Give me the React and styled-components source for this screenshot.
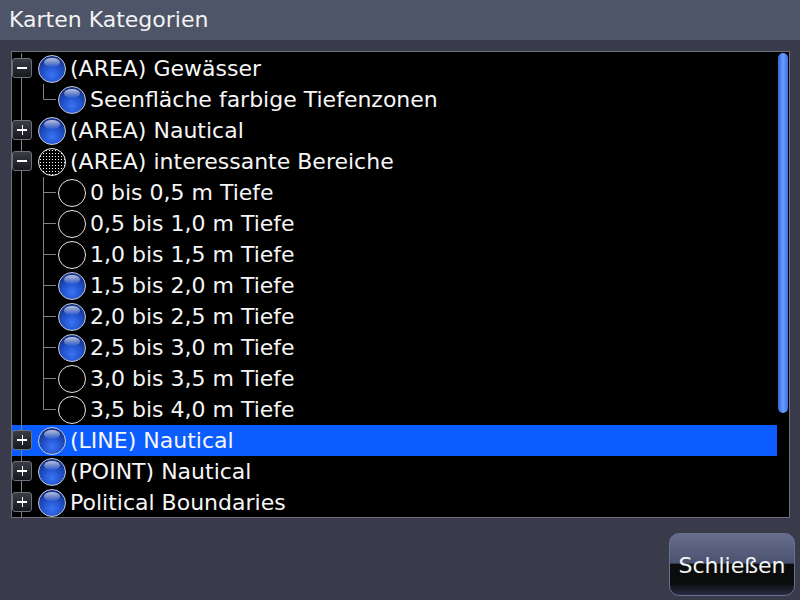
import React from 'react';
import styled, { createGlobalStyle, css } from 'styled-components';

const GlobalStyle = createGlobalStyle`
  html, body {
    margin: 0;
    padding: 0;
    background: #393b4a;
  }
  * {
    box-sizing: border-box;
  }
`;

const rows = [
  { label: '(AREA) Gewässer', level: 0, toggle: 'minus', ball: 'filled' },
  { label: 'Seenfläche farbige Tiefenzonen', level: 1, branch: 'elbow', ball: 'filled' },
  { label: '(AREA) Nautical', level: 0, toggle: 'plus', ball: 'filled' },
  { label: '(AREA) interessante Bereiche', level: 0, toggle: 'minus', ball: 'dotted' },
  { label: '0 bis 0,5 m Tiefe', level: 1, branch: 'tee', ball: 'empty' },
  { label: '0,5 bis 1,0 m Tiefe', level: 1, branch: 'tee', ball: 'empty' },
  { label: '1,0 bis 1,5 m Tiefe', level: 1, branch: 'tee', ball: 'empty' },
  { label: '1,5 bis 2,0 m Tiefe', level: 1, branch: 'tee', ball: 'filled' },
  { label: '2,0 bis 2,5 m Tiefe', level: 1, branch: 'tee', ball: 'filled' },
  { label: '2,5 bis 3,0 m Tiefe', level: 1, branch: 'tee', ball: 'filled' },
  { label: '3,0 bis 3,5 m Tiefe', level: 1, branch: 'tee', ball: 'empty' },
  { label: '3,5 bis 4,0 m Tiefe', level: 1, branch: 'elbow', ball: 'empty' },
  { label: '(LINE) Nautical', level: 0, toggle: 'plus', ball: 'filled', selected: true },
  { label: '(POINT) Nautical', level: 0, toggle: 'plus', ball: 'filled' },
  { label: 'Political Boundaries', level: 0, toggle: 'plus', ball: 'filled' },
];

const TreeLines = ({ level, branch }) => {
  const width = level === 0 ? 24 : 44;
  return (
    <Lines width={width} height="31" viewBox={`0 0 ${width} 31`}>
      <line x1="9.5" y1="0" x2="9.5" y2="31" stroke="#7d7f88" strokeWidth="1" />
      {level === 1 && (
        <>
          <line
            x1="31.5"
            y1="0"
            x2="31.5"
            y2={branch === 'tee' ? 31 : 15.5}
            stroke="#7d7f88"
            strokeWidth="1"
          />
          <line x1="31.5" y1="15.5" x2="44" y2="15.5" stroke="#7d7f88" strokeWidth="1" />
        </>
      )}
    </Lines>
  );
};

const TreeRow = ({ label, level, toggle, branch, ball, selected }) => (
  <Row selected={selected}>
    <Gutter>
      <TreeLines level={level} branch={branch} />
      {toggle && <Toggle kind={toggle} />}
    </Gutter>
    <Ball kind={ball} />
    <Label>{label}</Label>
  </Row>
);

export default function App() {
  return (
    <>
      <GlobalStyle />
      <Screen>
        <TitleBar>Karten Kategorien</TitleBar>
        <Panel>
          <TreeList>
            {rows.map((r) => (
              <TreeRow key={r.label} {...r} />
            ))}
          </TreeList>
          <ScrollThumb />
        </Panel>
        <Footer>
          <CloseButton>
            <span>Schließen</span>
          </CloseButton>
        </Footer>
      </Screen>
    </>
  );
}

const Screen = styled.div`
  width: 800px;
  height: 600px;
  display: flex;
  flex-direction: column;
  background: #393b4a;
  font-family: 'DejaVu Sans', Verdana, sans-serif;
  color: #f4f4f4;
  overflow: hidden;
`;

const TitleBar = styled.div`
  height: 40px;
  flex: none;
  display: flex;
  align-items: center;
  padding-left: 9px;
  padding-bottom: 2px;
  background: #4e5569;
  font-size: 22px;
  color: #f2f2f2;
`;

const Panel = styled.div`
  position: relative;
  margin: 11px 0 0 11px;
  width: 779px;
  height: 467px;
  flex: none;
  border: 1px solid #6e717c;
  background: #000;
  padding: 1px 12px 0 0;
  overflow: hidden;
`;

const TreeList = styled.div`
  display: flex;
  flex-direction: column;
`;

const Row = styled.div`
  height: 31px;
  display: flex;
  align-items: center;
  background: ${({ selected }) => (selected ? '#0b5dff' : 'transparent')};
`;

const Gutter = styled.div`
  position: relative;
  height: 31px;
  flex: none;
  display: flex;
`;

const Lines = styled.svg`
  display: block;
`;

const Toggle = styled.div`
  position: absolute;
  left: 0;
  top: 5px;
  width: 20px;
  height: 20px;
  border: 1px solid #6f727c;
  border-radius: 3px;
  background: linear-gradient(#3b3d45, #17181c);

  &::before,
  &::after {
    content: '';
    position: absolute;
    background: #fff;
  }
  &::before {
    left: 4px;
    top: 8px;
    width: 10px;
    height: 1.5px;
  }
  ${({ kind }) =>
    kind === 'plus'
      ? css`
          &::after {
            left: 8.5px;
            top: 3.5px;
            width: 1.5px;
            height: 10px;
          }
        `
      : css`
          &::after {
            display: none;
          }
        `}
`;

const ballStyles = {
  filled: css`
    border: 1px solid #c9cdd8;
    background: radial-gradient(
      circle at 50% 72%,
      #3a74f4 0%,
      #2252cc 40%,
      #15348c 75%,
      #0b1b55 100%
    );
    &::after {
      content: '';
      position: absolute;
      left: 5px;
      top: 2px;
      width: 16px;
      height: 9px;
      border-radius: 50%;
      background: linear-gradient(rgba(255, 255, 255, 0.7), rgba(255, 255, 255, 0.04));
    }
  `,
  empty: css`
    border: 1px solid #e6e6e6;
    background: #000;
  `,
  dotted: css`
    border: 1px solid #f0f0f0;
    background-color: #000;
    background-image: radial-gradient(circle, #fff 0.6px, transparent 0.9px);
    background-size: 3px 3px;
  `,
};

const Ball = styled.div`
  position: relative;
  width: 28px;
  height: 28px;
  flex: none;
  margin-left: 2px;
  border-radius: 50%;
  ${({ kind }) => ballStyles[kind]}
`;

const Label = styled.span`
  margin-left: 4px;
  font-size: 22px;
  white-space: nowrap;
  color: #f6f6f6;
`;

const ScrollThumb = styled.div`
  position: absolute;
  right: 1px;
  top: 1px;
  width: 10px;
  height: 360px;
  border-radius: 5px;
  background: linear-gradient(90deg, #2f66dc, #6a9fff 50%, #3a72e6);
`;

const Footer = styled.div`
  flex: 1;
  display: flex;
  justify-content: flex-end;
  align-items: flex-end;
  padding: 0 5px 4px 0;
`;

const CloseButton = styled.button`
  width: 126px;
  height: 63px;
  padding: 0;
  border: 1px solid #6a7090;
  border-radius: 10px;
  background: linear-gradient(
    #666e8c 0%,
    #4b5270 48%,
    #0b0d0d 49%,
    #0b0d0d 80%,
    #272c40 100%
  );
  font-family: 'DejaVu Sans', Verdana, sans-serif;
  font-size: 22px;
  color: #f4f4f4;
  display: flex;
  align-items: center;
  justify-content: center;

  span {
    margin-top: 2px;
  }
`;
